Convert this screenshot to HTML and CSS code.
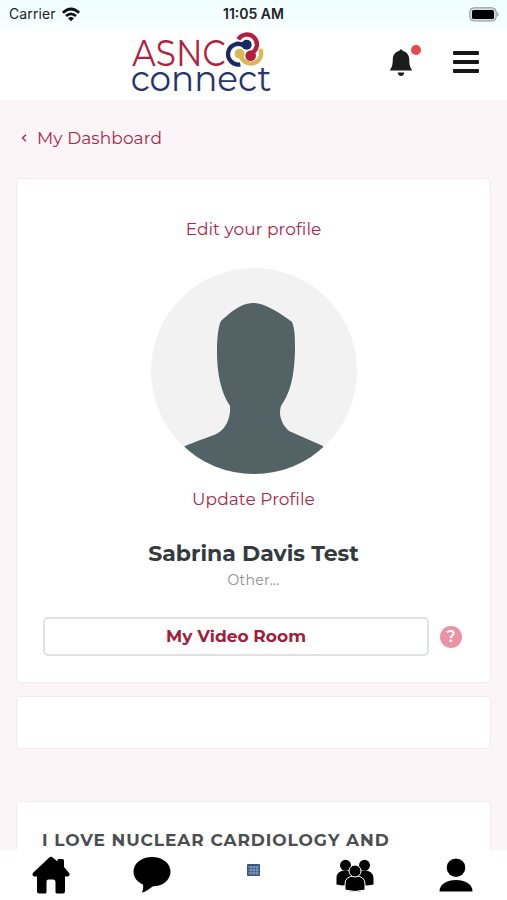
FILE: index.html
```html
<!DOCTYPE html>
<html lang="en">
<head>
  <meta charset="UTF-8">
  <meta name="viewport" content="width=device-width, initial-scale=1.0">
  <title>ASNC Connect</title>
  <link rel="stylesheet" href="styles.css">
</head>
<body>

  <header class="header">
    <div class="status">
      <span class="carrier">Carrier
        <svg width="20" height="15" viewBox="0 0 20 15" fill="none" stroke="#111" stroke-width="2.7">
          <path d="M1.9 5.8Q10-1.8 18.1 5.8M5 9.1Q10 4.5 15 9.1"/>
          <path d="M7 11.3Q10 8.8 13 11.3L10 14.2Z" fill="#111" stroke="none"/>
        </svg>
      </span>
      <span class="time">11:05 AM</span>
      <svg class="battery" width="31" height="15" viewBox="0 0 31 15">
        <rect x=".8" y=".8" width="26.4" height="13.2" rx="4" fill="#d5dddd" stroke="#8d9696"/>
        <rect x="3" y="3" width="22" height="9" rx="1.5" fill="#000"/>
        <path d="M28.2 5Q31 7.4 28.2 9.8Z" fill="#999"/>
      </svg>
    </div>

    <div class="topbar">
      <svg class="logo" width="144" height="70" viewBox="30 30 432 210">
        <g class="logo-text">
          <text class="asnc" x="37" y="138" textLength="280" lengthAdjust="spacingAndGlyphs">ASNC</text>
          <text class="connect" x="32" y="212" textLength="422" lengthAdjust="spacingAndGlyphs">connect</text>
        </g>
        <g fill="none" stroke-width="13">
          <path d="M355 58A30 30 0 1 1 398 98" stroke="#b41f3d"/>
          <path d="M374 78A31 31 0 1 0 361 133" stroke="#172b5e"/>
          <path d="M421 87A31 31 0 1 1 364 112" stroke="#d8b955"/>
        </g>
        <circle cx="380" cy="74" r="15" fill="#172b5e"/>
        <circle cx="392" cy="107" r="16" fill="#b41f3d"/>
        <circle cx="359" cy="101" r="15" fill="#d8b955"/>
      </svg>

      <div class="actions">
        <span class="bell">
          <svg width="24" height="28" viewBox="0 0 24 28" fill="#1c1c1c">
            <path d="M12 0.500c1 0 1.600.6 1.800 1.500C18 3 20 6 20.200 10c.2 6 .5 7.500 3 11.500H.8C3.300 17.500 3.600 16 3.800 10 4 6 6 3 10.200 2c.2-.9.800-1.500 1.800-1.500Z"/>
            <path d="M8.700 23.600h6.600c-.3 2.200-1.500 3.400-3.300 3.400s-3-1.200-3.300-3.400Z"/>
          </svg>
          <span class="dot"></span>
        </span>
        <span class="menu"><i></i><i></i><i></i></span>
      </div>
    </div>
  </header>

  <main class="content">
    <a class="back">
      <svg width="6" height="8" viewBox="0 0 6 8" fill="none" stroke="#ad2549" stroke-width="1.4"><path d="M5 .8L1.500 4L5 7.200"/></svg>
      <span>My Dashboard</span>
    </a>

    <section class="card profile">
      <a class="link">Edit your profile</a>
      <svg class="avatar" width="206" height="206" viewBox="0 0 206 206">
        <defs><clipPath id="round"><circle cx="103" cy="103" r="103"/></clipPath></defs>
        <circle cx="103" cy="103" r="103" fill="#f2f2f2"/>
        <path clip-path="url(#round)" fill="#526265" d="M70 53C86 38 94 35 103 35C114 35 129 45 141 54C144 61 144 70 144 83C143 111 139 125 130 138C127 147 131 157 138 163L172 178V206H30V180C38 176 52 171 63 167C74 163 80 151 79 138C69 123 66 103 66 84C66 71 67 59 70 53Z"/>
      </svg>
      <a class="link">Update Profile</a>
      <h1>Sabrina Davis Test</h1>
      <p class="role">Other...</p>
      <div class="room">
        <button type="button">My Video Room</button>
        <span class="help">?</span>
      </div>
    </section>

    <section class="card empty"></section>

    <section class="card post">
      <h2>I LOVE NUCLEAR CARDIOLOGY AND</h2>
    </section>
  </main>

  <nav class="tabs">
    <a>
      <svg width="38" height="38" viewBox="0 0 38 38">
        <path d="M17 1.700Q19 0 21 1.700L25.500 5.500V4Q25.500 3 26.500 3H30.500Q32 3 32 4.500V11L36.700 16.500Q39 19 36 20.500H33V35Q33 37.500 31 37.500H25Q23.500 37.500 23.500 36V26Q23.500 23.500 21.500 23.500H16.500Q14.500 23.500 14.500 25.500V36Q14.500 37.500 13 37.500H7Q5 37.500 5 35.500V20.500H2Q-.8 19 1.400 16.500Z"/>
      </svg>
    </a>
    <a>
      <svg width="38" height="36" viewBox="0 0 38 36">
        <path d="M19 0C29.500 0 37.500 6.300 37.500 14.700S29.500 29.300 20 29.300C17 31.500 13.500 34.500 9 35.800C10 33 10.500 30 10 27.500C4.500 25 .5 20.500 .5 14.700C.5 6.300 8.500 0 19 0Z"/>
      </svg>
    </a>
    <a class="calendar">
      <svg width="13" height="12" viewBox="0 0 13 12">
        <rect width="13" height="12" rx="1" fill="#3c5683"/>
        <path d="M1 3H12M1 6H12M1 9H12M4 2V11M7 2V11M10 2V11" stroke="#a9bad2" stroke-width=".7"/>
      </svg>
    </a>
    <a>
      <svg width="38" height="33" viewBox="0 0 38 33">
        <circle cx="9.500" cy="6.300" r="5.500"/>
        <circle cx="28.500" cy="6.300" r="5.500"/>
        <path d="M.5 25.500V19Q.5 11.500 9.500 11.500T18 19V25.500Q9 27.500 .5 25.500ZM20 25.500V19Q20 11.500 28.500 11.500T37.500 19V25.500Q29 27.500 20 25.500Z"/>
        <path d="M9 31V25Q9 17 19 17T29 25V31Q19 34 9 31Z" stroke="#fff"/>
        <circle cx="19" cy="12" r="6" stroke="#fff"/>
      </svg>
    </a>
    <a>
      <svg width="34" height="34" viewBox="0 0 34 34">
        <circle cx="17" cy="9.700" r="9.300"/>
        <path d="M.5 33.500C.5 26 8 22 17 22S33.500 26 33.500 33.500Z"/>
      </svg>
    </a>
  </nav>

</body>
</html>
```

FILE: styles.css
```css
* {
  box-sizing: border-box;
}
body {
  margin: 0;
  height: 900px;
  display: flex;
  flex-direction: column;
  overflow: hidden;
  background: #fbf5f7;
  font-family: Montserrat, Inter, sans-serif;
}
svg {
  display: block;
}
.header {
  height: 100px;
  flex: none;
  background: linear-gradient(#effeff 0, #f5feff 22px, #fff 34px);
}
.status {
  height: 28px;
  padding: 0 7px 0 9px;
  display: grid;
  grid-template-columns: 1fr auto 1fr;
  align-items: center;
  font-family: Inter, sans-serif;
  font-size: 14px;
  line-height: 16px;
  color: #222;
}
.carrier {
  display: flex;
  align-items: center;
  gap: 5px;
  letter-spacing: 0.1px;
}
.time {
  padding-right: 2px;
  font-weight: 600;
}
.battery {
  justify-self: end;
}
.topbar {
  height: 72px;
  padding: 2px 28px 0 130px;
  display: flex;
  justify-content: space-between;
}
.logo-text {
  font-family: Montserrat, Inter, sans-serif;
  font-weight: 400;
}
.asnc {
  font-size: 111px;
  fill: #b41f3d;
}
.connect {
  font-size: 105px;
  fill: #25346f;
}
.actions {
  display: flex;
  gap: 40px;
  padding-top: 19px;
}
.bell {
  position: relative;
}
.dot {
  position: absolute;
  top: -4px;
  right: -8px;
  width: 10px;
  height: 10px;
  border-radius: 50%;
  background: #e14b4d;
}
.menu {
  width: 26px;
  display: flex;
  flex-direction: column;
  gap: 5px;
  padding-top: 2px;
}
.menu i {
  height: 4px;
  border-radius: 1px;
  background: #161616;
}
.content {
  flex: 1;
  min-height: 0;
  padding: 0 16px;
  overflow: hidden;
}
.back {
  height: 78px;
  padding: 0 0 2px 5px;
  display: flex;
  align-items: center;
  gap: 10px;
  font-size: 17px;
  letter-spacing: 0.08px;
  color: #ad2549;
}
.card {
  background: #fff;
  border: 1px solid #f2ecee;
  border-radius: 4px;
}
.profile {
  height: 505px;
  padding: 38px 26px 0;
  display: flex;
  flex-direction: column;
  align-items: center;
}
.link {
  font-size: 17px;
  line-height: 24px;
  letter-spacing: 0.05px;
  color: #ad2549;
}
.avatar {
  margin: 27px 0 13px;
}
h1 {
  margin: 28px 0 0;
  font-size: 22px;
  line-height: 30px;
  font-weight: 700;
  color: #343a3d;
}
.role {
  margin: 1px 0 0;
  font-size: 14px;
  line-height: 20px;
  letter-spacing: 0.3px;
  color: #8a8d90;
}
.room {
  width: 100%;
  margin-top: 27px;
  display: flex;
  align-items: center;
  gap: 11px;
}
.room button {
  width: 386px;
  height: 39px;
  padding: 0 0 2px;
  border: 2px solid #dfe2e3;
  border-radius: 5px;
  background: #fff;
  font: 700 17px Montserrat, Inter, sans-serif;
  letter-spacing: 0;
  color: #a31d3b;
}
.help {
  width: 22px;
  height: 22px;
  border-radius: 50%;
  background: #eb93a5;
  font-size: 16px;
  font-weight: 600;
  line-height: 22px;
  text-align: center;
  color: #fff;
}
.empty {
  height: 53px;
  margin: 13px 0 52px;
}
.post {
  height: 140px;
  padding: 27px 25px;
}
h2 {
  margin: 0;
  font-size: 17px;
  line-height: 22px;
  font-weight: 700;
  letter-spacing: 0.93px;
  white-space: nowrap;
  color: #4b4e51;
}
.tabs {
  height: 50px;
  flex: none;
  display: grid;
  grid-template-columns: repeat(5, 1fr);
  justify-items: center;
  align-items: center;
  background: #fff;
}
.calendar {
  padding-bottom: 10px;
}
```
